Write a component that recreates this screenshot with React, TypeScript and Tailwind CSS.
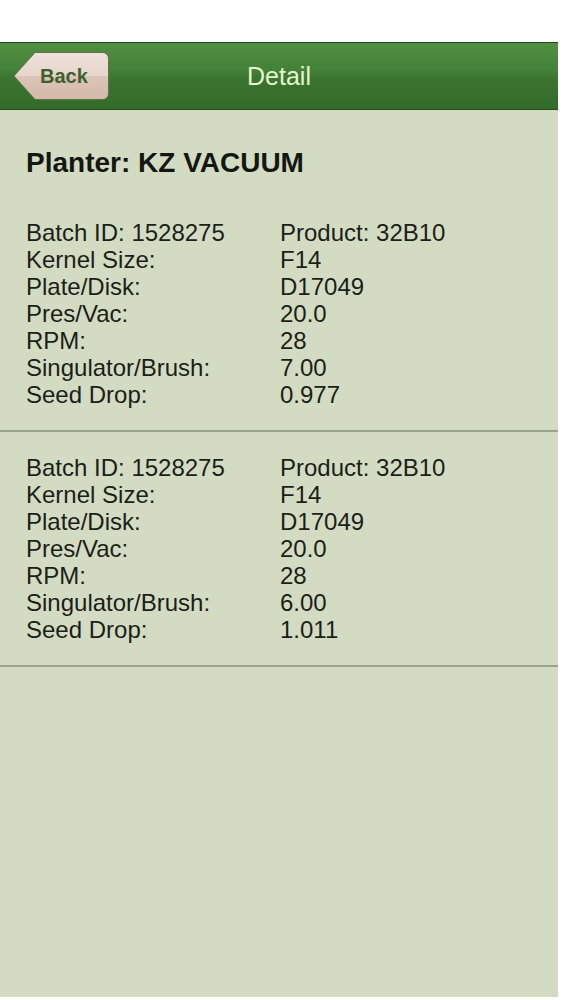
import React from 'react'

type Row = { label: string; value: string }

const batches: Row[][] = [
    [
        { label: 'Batch ID: 1528275', value: 'Product: 32B10' },
        { label: 'Kernel Size:', value: 'F14' },
        { label: 'Plate/Disk:', value: 'D17049' },
        { label: 'Pres/Vac:', value: '20.0' },
        { label: 'RPM:', value: '28' },
        { label: 'Singulator/Brush:', value: '7.00' },
        { label: 'Seed Drop:', value: '0.977' },
    ],
    [
        { label: 'Batch ID: 1528275', value: 'Product: 32B10' },
        { label: 'Kernel Size:', value: 'F14' },
        { label: 'Plate/Disk:', value: 'D17049' },
        { label: 'Pres/Vac:', value: '20.0' },
        { label: 'RPM:', value: '28' },
        { label: 'Singulator/Brush:', value: '6.00' },
        { label: 'Seed Drop:', value: '1.011' },
    ],
]

function BackButton() {
    return (
        <button className="relative flex h-[50px] w-[97px] items-center pl-[27px]">
            <svg className="absolute inset-0" width="97" height="50" viewBox="0 0 97 50">
                <defs>
                    <linearGradient id="backFill" x1="0" y1="0" x2="0" y2="1">
                        <stop offset="0" stopColor="#eee2da" />
                        <stop offset="0.5" stopColor="#e6d5cb" />
                        <stop offset="0.5" stopColor="#dcc6b8" />
                        <stop offset="1" stopColor="#d2b9a8" />
                    </linearGradient>
                </defs>
                <path
                    d="M1 25 L22 1.5 H89 Q95.5 1.5 95.5 8 V42 Q95.5 48.5 89 48.5 H22 Z"
                    fill="url(#backFill)"
                    stroke="#5f7350"
                    strokeWidth="1"
                />
            </svg>
            <span className="relative text-[20px] font-bold text-[#3e5f31]">Back</span>
        </button>
    )
}

function Batch({ rows }: { rows: Row[] }) {
    return (
        <div className="border-b-2 border-[#9aa48d] py-[22px] pl-[26px]">
            {rows.map((row, i) => (
                <div key={i} className="grid grid-cols-[254px_1fr] text-[24px] leading-[27px] text-[#1c1e19]">
                    <span>{row.label}</span>
                    <span>{row.value}</span>
                </div>
            ))}
        </div>
    )
}

export default function App() {
    return (
        <div className="h-[1000px] w-[563px] bg-white pt-[42px] font-['Liberation_Sans',Arial,sans-serif]">
            <div className="flex h-[955px] w-[558px] flex-col bg-[#d3dcc2]">
                {/* nav bar */}
                <div className="relative flex h-[68px] shrink-0 items-center border-y border-[#2a4521] bg-[linear-gradient(#52903f,#44813a_40%,#3a742f_55%,#336b28)] px-[13px]">
                    <BackButton />
                    <div className="absolute inset-0 flex items-center justify-center pt-[2px] text-[25px] text-[#e4f6cc]">
                        Detail
                    </div>
                </div>

                {/* header */}
                <div className="pb-[19px] pl-[26px] pt-[38px] text-[28px] font-bold leading-[30px] text-[#141612]">
                    Planter: KZ VACUUM
                </div>

                {batches.map((rows, i) => (
                    <Batch key={i} rows={rows} />
                ))}
            </div>
        </div>
    )
}
